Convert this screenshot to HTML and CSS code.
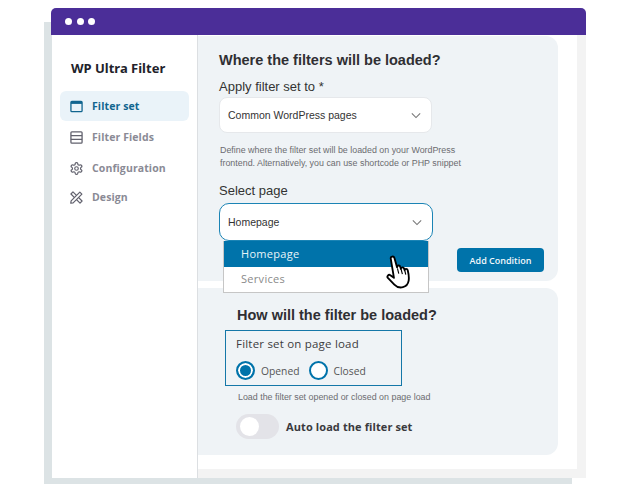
FILE: index.html
```html
<!DOCTYPE html>
<html lang="en">
<head>
    <meta charset="UTF-8">
    <meta name="viewport" content="width=device-width, initial-scale=1.0">
    <link rel="stylesheet" href="styles.css">
    <title>WP Ultra Filter</title>
</head>
<body>
    <div class="window">
        <div class="titlebar">
            <span class="dot"></span>
            <span class="dot"></span>
            <span class="dot"></span>
        </div>
        <div class="window-body">
            <aside class="sidebar">
                <h2 class="brand">WP Ultra Filter</h2>
                <nav class="menu">
                    <a class="menu-item active">
                        <svg class="menu-icon" viewBox="0 0 14 14"><rect x="1" y="1.6" width="12" height="11" rx="1" fill="none" stroke="currentColor" stroke-width="1.4"/><rect x="1" y="1.6" width="12" height="2.6" fill="currentColor"/></svg>
                        Filter set
                    </a>
                    <a class="menu-item">
                        <svg class="menu-icon" viewBox="0 0 14 14"><rect x="1" y="1" width="12" height="12" rx="1" fill="none" stroke="currentColor" stroke-width="1.4"/><path d="M1 5h12M1 9h12" stroke="currentColor" stroke-width="1.4"/></svg>
                        Filter Fields
                    </a>
                    <a class="menu-item">
                        <svg class="menu-icon" viewBox="1 1 22 22" fill="none" stroke="currentColor" stroke-width="2"><path d="M12.22 2h-.44a2 2 0 0 0-2 2v.18a2 2 0 0 1-1 1.73l-.43.25a2 2 0 0 1-2 0l-.15-.08a2 2 0 0 0-2.73.73l-.22.38a2 2 0 0 0 .73 2.73l.15.1a2 2 0 0 1 1 1.72v.51a2 2 0 0 1-1 1.74l-.15.09a2 2 0 0 0-.73 2.73l.22.38a2 2 0 0 0 2.73.73l.15-.08a2 2 0 0 1 2 0l.43.25a2 2 0 0 1 1 1.73V20a2 2 0 0 0 2 2h.44a2 2 0 0 0 2-2v-.18a2 2 0 0 1 1-1.73l.43-.25a2 2 0 0 1 2 0l.15.08a2 2 0 0 0 2.73-.73l.22-.39a2 2 0 0 0-.73-2.73l-.15-.08a2 2 0 0 1-1-1.74v-.5a2 2 0 0 1 1-1.74l.15-.09a2 2 0 0 0 .73-2.73l-.22-.38a2 2 0 0 0-2.73-.73l-.15.08a2 2 0 0 1-2 0l-.43-.25a2 2 0 0 1-1-1.73V4a2 2 0 0 0-2-2z"/><circle cx="12" cy="12" r="3"/></svg>
                        Configuration
                    </a>
                    <a class="menu-item menu-item-last">
                        <svg class="menu-icon" viewBox="0 0 14 14" fill="none" stroke="currentColor" stroke-width="1.3" stroke-linejoin="round"><path d="M3.2 1 13 10.8 10.8 13 1 3.2z"/><path d="M1.2 10.6 10.6 1.2l2.2 2.2-9.4 9.4-2.6.4z" fill="#fff"/></svg>
                        Design
                    </a>
                </nav>
            </aside>
            <main class="content">
                <section class="card card-where">
                    <h1 class="card-title">Where the filters will be loaded?</h1>
                    <label class="field-label">Apply filter set to *</label>
                    <div class="select">
                        <span>Common WordPress pages</span>
                        <svg class="chevron" viewBox="0 0 12 8"><path d="M1 1.5 6 6.5 11 1.5"/></svg>
                    </div>
                    <p class="hint">Define where the filter set will be loaded on your WordPress<br>frontend. Alternatively, you can use shortcode or PHP snippet</p>
                    <label class="field-label">Select page</label>
                    <div class="select-wrap">
                        <div class="select select-open">
                            <span>Homepage</span>
                            <svg class="chevron" viewBox="0 0 12 8"><path d="M1 1.5 6 6.5 11 1.5"/></svg>
                        </div>
                        <ul class="dropdown">
                            <li class="option selected">Homepage</li>
                            <li class="option">Services</li>
                        </ul>
                        <svg class="hand" viewBox="0 0 26 34">
                            <path d="M4.5 3.5c-.4-1.9 2.8-2.9 3.5-.8l2.6 9.3c-.3-2 2.6-2.6 3.2-.4l.6 2c-.2-1.9 2.6-2.3 3.1-.3l.5 1.6c0-1.7 2.5-1.9 3 0 .9 3.6 1.4 7 .9 10-.5 3-2.4 5.6-5.6 6.4-3.4.8-6.2-.4-8.3-2.6L1.7 22.3c-1.3-1.6.6-3.8 2.4-2.7l3.5 2.6z" fill="#fff" stroke="#000" stroke-width="1.8" stroke-linejoin="round"/>
                            <path d="M11 13l1.300 5M14.600 14l1.200 4.500M18.200 15.300l.9 3.700" stroke="#000" stroke-width="1.100" fill="none"/>
                        </svg>
                    </div>
                    <div class="card-actions">
                        <button class="btn">Add Condition</button>
                    </div>
                </section>
                <section class="card card-how">
                    <h1 class="card-title">How will the filter be loaded?</h1>
                    <div class="radio-box">
                        <div class="radio-title">Filter set on page load</div>
                        <div class="radio-row">
                            <span class="radio checked"></span>
                            <span class="radio-label">Opened</span>
                            <span class="radio"></span>
                            <span class="radio-label">Closed</span>
                        </div>
                    </div>
                    <p class="hint hint-load">Load the filter set opened or closed on page load</p>
                    <div class="toggle-row">
                        <span class="toggle"><span class="knob"></span></span>
                        <span class="toggle-label">Auto load the filter set</span>
                    </div>
                </section>
            </main>
        </div>
    </div>
</body>
</html>
```

FILE: styles.css
```css
html, body {
    margin: 0;
    padding: 0;
    font-family: "Liberation Sans", Arial, sans-serif;
}
html {
    background-color: #fff;
}
body {
    width: 630px;
    height: 491px;
    overflow: hidden;
    padding: 8px 0 0 51px;
    box-sizing: border-box;
}
h1, h2, p, ul {
    margin: 0;
    padding: 0;
}

/* window */
.window {
    position: relative;
    isolation: isolate;
    width: 535px;
    height: 470px;
    display: flex;
    flex-direction: column;
}
.window::before {
    content: "";
    position: absolute;
    left: -7px;
    top: 14px;
    width: 528px;
    height: 462px;
    background-color: #dce3e5;
    z-index: -1;
}
.titlebar {
    height: 27px;
    flex: none;
    box-sizing: border-box;
    padding-left: 14px;
    display: flex;
    align-items: center;
    gap: 4.500px;
    background-color: #4b2e98;
    border-radius: 5px 5px 0 0;
}
.dot {
    width: 7px;
    height: 7px;
    border-radius: 50%;
    background-color: #fff;
}
.window-body {
    flex: 1;
    display: flex;
    min-height: 0;
}

/* sidebar */
.sidebar {
    width: 146px;
    box-sizing: border-box;
    margin-left: 1px;
    background-color: #fff;
    border-right: 1px solid #dcdfe2;
    flex: none;
}
.brand {
    margin: 25px 0 0 19px;
    font-family: "Noto Sans", sans-serif;
    font-size: 13px;
    line-height: 16px;
    font-weight: 700;
    color: #22222a;
}
.menu {
    margin: 15px 8px 0;
    display: flex;
    flex-direction: column;
}
.menu-item {
    height: 30px;
    box-sizing: border-box;
    padding-left: 10px;
    display: flex;
    align-items: center;
    gap: 9px;
    font-family: "Open Sans", sans-serif;
    font-size: 10.500px;
    letter-spacing: .1px;
    font-weight: 700;
    color: #8a8a95;
    margin-bottom: 1px;
}
.menu-item-last {
    margin-top: -2px;
}
.menu-item.active {
    background-color: #eaf3f9;
    border-radius: 6px;
    color: #11658f;
}
.menu-icon {
    width: 13px;
    height: 13px;
    flex: none;
    color: #62626e;
}
.active .menu-icon {
    color: #11658f;
}

/* main area */
.content {
    flex: 1;
    box-sizing: border-box;
    background-color: #fff;
    border-right: 9px solid #f3f3f3;
    border-bottom: 9px solid #f3f3f3;
    padding: 1px 19px 0 0;
    display: flex;
    flex-direction: column;
    gap: 7px;
}
.card {
    background-color: #eff3f6;
    border-radius: 0 12px 12px 0;
    box-sizing: border-box;
}
.card-where {
    height: 245px;
    padding: 15px 14px 0 21px;
}
.card-how {
    height: 167px;
    padding: 18px 0 0 27px;
}
.card-title {
    font-size: 14.500px;
    line-height: 18px;
    font-weight: 700;
    color: #2f2f33;
}
.card-how .card-title {
    margin-left: 12px;
}
.field-label {
    display: block;
    margin-top: 9px;
    font-size: 13px;
    line-height: 17px;
    color: #333;
}
.select {
    margin-top: 2px;
    width: 213px;
    height: 36px;
    box-sizing: border-box;
    padding: 0 10px 0 8px;
    display: flex;
    align-items: center;
    justify-content: space-between;
    background-color: #fff;
    border: 1px solid #e6e8eb;
    border-radius: 8px;
    font-size: 10.500px;
    color: #333;
}
.chevron {
    width: 10px;
    height: 7px;
    fill: none;
    stroke: #777;
    stroke-width: 1.300;
}
.hint {
    margin-top: 11px;
    margin-left: 1px;
    font-size: 8.900px;
    line-height: 13px;
    color: #6c6c70;
}
.card-where .field-label + .select-wrap {
    margin-top: 4px;
}
.hint + .field-label {
    margin-top: 12px;
}
.select-wrap {
    position: relative;
}
.select-open {
    margin-top: 0;
    width: 214px;
    height: 38px;
    border: 1px solid #1b84b5;
    border-radius: 10px;
}
.dropdown {
    position: absolute;
    left: 4px;
    top: 38px;
    width: 206px;
    box-sizing: border-box;
    list-style: none;
    background-color: #fff;
    border: 1px solid #c6c6c6;
    border-top: none;
    z-index: 2;
    font-family: "Open Sans", sans-serif;
    font-size: 11px;
    letter-spacing: .3px;
}
.option {
    height: 25px;
    line-height: 24px;
    padding-left: 17px;
    color: #8a8a8a;
}
.option.selected {
    height: 26px;
    line-height: 25px;
    background-color: #0073aa;
    color: #e8f3f8;
}
.hand {
    position: absolute;
    left: 167px;
    top: 52px;
    width: 27px;
    height: 35px;
    z-index: 3;
}
.card-actions {
    display: flex;
    justify-content: flex-end;
    margin-top: 7px;
}
.btn {
    width: 87px;
    height: 24px;
    padding: 0;
    background-color: #0073aa;
    color: #f2f8fb;
    border: none;
    border-radius: 4px;
    font-family: "Open Sans", sans-serif;
    font-size: 9px;
    font-weight: 600;
}

/* radio box */
.radio-box {
    margin-top: 6px;
    width: 177px;
    height: 56px;
    box-sizing: border-box;
    border: 1px solid #1477a8;
    padding: 5px 0 0 10px;
    font-family: "Open Sans", sans-serif;
}
.radio-title {
    font-size: 11.500px;
    line-height: 16px;
    letter-spacing: .2px;
    color: #3c3c40;
}
.radio-row {
    margin-top: 9px;
    display: flex;
    align-items: center;
}
.radio {
    width: 19px;
    height: 19px;
    box-sizing: border-box;
    border: 2px solid #0073aa;
    border-radius: 50%;
    background-color: #fff;
    flex: none;
}
.radio.checked {
    background-color: #0073aa;
    box-shadow: inset 0 0 0 2px #fff;
}
.radio-label {
    margin: 0 9px 0 6px;
    font-size: 10.300px;
    color: #555;
}
.hint-load {
    margin: 5px 0 0 13px;
}
.toggle-row {
    margin: 10px 0 0 11px;
    display: flex;
    align-items: center;
    gap: 7px;
}
.toggle {
    width: 43px;
    height: 25px;
    box-sizing: border-box;
    padding: 3px 4px;
    background-color: #e3e3e8;
    border-radius: 13px;
    flex: none;
}
.knob {
    display: block;
    width: 19px;
    height: 19px;
    border-radius: 50%;
    background-color: #fff;
}
.toggle-label {
    font-family: "Open Sans", sans-serif;
    font-size: 11px;
    font-weight: 700;
    letter-spacing: .1px;
    color: #3a3a3e;
}
```
